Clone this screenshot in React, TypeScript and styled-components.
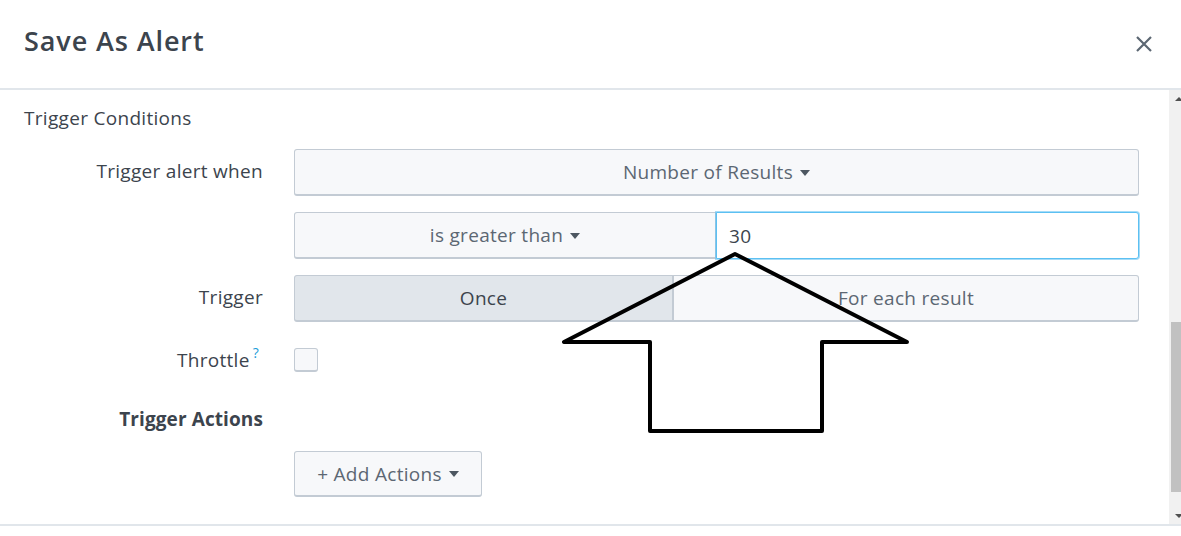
import React from "react";
import styled, { createGlobalStyle } from "styled-components";

const Global = createGlobalStyle`
  *, *::before, *::after { box-sizing: border-box; }
  html, body { margin: 0; padding: 0; background: #fff; }
  body { font-family: "Open Sans", Lato, "Liberation Sans", sans-serif; }
`;

const Page = styled.div`
  position: relative;
  width: 1181px;
  height: 536px;
  background: #fff;
  display: flex;
  flex-direction: column;
  overflow: hidden;
  color: #3c444d;
  font-family: "Open Sans", Lato, "Liberation Sans", sans-serif;
  letter-spacing: 0.3px;
`;

const Header = styled.header`
  height: 90px;
  flex: none;
  display: flex;
  align-items: center;
  justify-content: space-between;
  padding: 0 29px 0 24px;
  border-bottom: 2px solid #e1e6eb;
`;

const Title = styled.h1`
  margin: 0 0 8px 0;
  font-size: 27px;
  font-weight: 600;
  letter-spacing: 0.9px;
  color: #3c444d;
`;

const CloseButton = styled.button`
  width: 16px;
  height: 16px;
  padding: 0;
  border: 0;
  background: none;
  display: flex;
  align-items: center;
  justify-content: center;
  cursor: pointer;
`;

const Body = styled.div`
  height: 434px;
  flex: none;
  display: flex;
`;

const Content = styled.div`
  flex: 1;
  padding: 16px 0 0 24px;
  overflow: hidden;
`;

const SectionTitle = styled.div`
  font-size: 19px;
  line-height: 24px;
  color: #3c444d;
  margin-bottom: 19px;
`;

const Form = styled.div`
  display: flex;
  flex-direction: column;
  gap: 16px;
`;

const Row = styled.div<{ $minHeight?: number }>`
  display: grid;
  grid-template-columns: 239px 845px;
  column-gap: 31px;
  min-height: ${(p) => (p.$minHeight ? `${p.$minHeight}px` : "0")};
`;

const Label = styled.div<{ $bold?: boolean }>`
  text-align: right;
  padding-top: 10px;
  font-size: 19px;
  line-height: 24px;
  height: 34px;
  font-weight: ${(p) => (p.$bold ? 700 : 400)};
  letter-spacing: ${(p) => (p.$bold ? "0.1px" : "0.3px")};
  color: #3c444d;
  white-space: nowrap;
`;

const Help = styled.span`
  display: inline-block;
  font-size: 14px;
  line-height: 14px;
  color: #1a9cd9;
  margin-left: 3px;
  margin-right: 4px;
  position: relative;
  top: -9px;
`;

const Caret = styled.span`
  display: inline-block;
  width: 0;
  height: 0;
  border-left: 5px solid transparent;
  border-right: 5px solid transparent;
  border-top: 6px solid #4d5761;
  margin-top: 1px;
`;

const SelectButton = styled.button<{ $join?: "left" | "right" | "none"; $active?: boolean }>`
  height: 47px;
  width: 100%;
  display: flex;
  align-items: center;
  justify-content: center;
  gap: 7px;
  font-family: inherit;
  font-size: 19px;
  letter-spacing: 0.3px;
  color: ${(p) => (p.$active ? "#3c444d" : "#5c6773")};
  background: ${(p) => (p.$active ? "#e1e6eb" : "#f7f8fa")};
  border: 1px solid #c3cbd4;
  border-bottom-width: 2px;
  border-radius: ${(p) =>
    p.$join === "left" ? "3px 0 0 3px" : p.$join === "right" ? "0 3px 3px 0" : "3px"};
  padding: 0 12px;
  cursor: pointer;
`;

const Joined = styled.div`
  display: flex;
  height: 47px;
`;

const Part = styled.div<{ $basis: number }>`
  flex: 0 0 ${(p) => p.$basis}px;
  display: flex;
`;

const TextInput = styled.input`
  flex: 1;
  min-width: 0;
  height: 47px;
  font-family: inherit;
  font-size: 19px;
  letter-spacing: 0.3px;
  color: #3c444d;
  background: #fff;
  border: 1px solid #5cc0f2;
  box-shadow: 0 0 0 1px rgba(92, 192, 242, 0.55);
  border-radius: 0 3px 3px 0;
  padding: 0 12px;
  outline: none;
`;

const Checkbox = styled.span`
  display: block;
  width: 24px;
  height: 24px;
  margin-top: 10px;
  background: #f7f8fa;
  border: 1px solid #c3cbd4;
  border-bottom-width: 2px;
  border-radius: 3px;
`;

const ActionButton = styled.button`
  height: 46px;
  width: 188px;
  display: flex;
  align-items: center;
  justify-content: center;
  gap: 7px;
  font-family: inherit;
  font-size: 19px;
  letter-spacing: 0.3px;
  color: #5c6773;
  background: #f7f8fa;
  border: 1px solid #c3cbd4;
  border-bottom-width: 2px;
  border-radius: 3px;
  cursor: pointer;
`;

const Scrollbar = styled.div`
  width: 12px;
  flex: none;
  background: #f1f1f1;
  display: flex;
  flex-direction: column;
  overflow: hidden;
`;

const ScrollArrow = styled.div<{ $dir: "up" | "down" }>`
  height: 17px;
  flex: none;
  display: flex;
  align-items: center;
  padding-left: 6px;
  &::after {
    content: "";
    display: block;
    width: 0;
    height: 0;
    border-left: 4px solid transparent;
    border-right: 4px solid transparent;
    ${(p) =>
      p.$dir === "up"
        ? "border-bottom: 4px solid #505050;"
        : "border-top: 4px solid #505050;"}
  }
`;

const Track = styled.div`
  flex: 1;
  display: flex;
  flex-direction: column;
  justify-content: flex-end;
  padding: 0 0 15px 2px;
`;

const Thumb = styled.div`
  height: 170px;
  width: 10px;
  background: #c1c1c1;
`;

const Footer = styled.footer`
  flex: 1;
  border-top: 2px solid #e1e6eb;
  background: #fff;
`;

const Overlay = styled.svg`
  position: absolute;
  left: 0;
  top: 0;
  pointer-events: none;
`;

export default function App() {
  return (
    <>
      <Global />
      <Page>
        <Header>
          <Title>Save As Alert</Title>
          <CloseButton aria-label="Close">
            <svg width="16" height="16" viewBox="0 0 16 16">
              <path d="M1 1 L15 15 M15 1 L1 15" stroke="#5c6773" strokeWidth="2.2" fill="none" />
            </svg>
          </CloseButton>
        </Header>
        <Body>
          <Content>
            <SectionTitle>Trigger Conditions</SectionTitle>
            <Form>
              <Row>
                <Label>Trigger alert when</Label>
                <SelectButton>
                  Number of Results <Caret />
                </SelectButton>
              </Row>
              <Row>
                <Label />
                <Joined>
                  <Part $basis={422}>
                    <SelectButton $join="left">
                      is greater than <Caret />
                    </SelectButton>
                  </Part>
                  <TextInput defaultValue="30" />
                </Joined>
              </Row>
              <Row>
                <Label>Trigger</Label>
                <Joined>
                  <Part $basis={379}>
                    <SelectButton $join="left" $active>
                      Once
                    </SelectButton>
                  </Part>
                  <Part $basis={466}>
                    <SelectButton $join="right">For each result</SelectButton>
                  </Part>
                </Joined>
              </Row>
              <Row $minHeight={43}>
                <Label>
                  Throttle<Help>?</Help>
                </Label>
                <div>
                  <Checkbox />
                </div>
              </Row>
              <Row $minHeight={38}>
                <Label $bold>Trigger Actions</Label>
                <div />
              </Row>
              <Row>
                <Label />
                <div>
                  <ActionButton>
                    + Add Actions <Caret />
                  </ActionButton>
                </div>
              </Row>
            </Form>
          </Content>
          <Scrollbar>
            <ScrollArrow $dir="up" />
            <Track>
              <Thumb />
            </Track>
            <ScrollArrow $dir="down" />
          </Scrollbar>
        </Body>
        <Footer />
        <Overlay width="1181" height="536" viewBox="0 0 1181 536">
          <polygon
            points="735,254 564,342 650,342 650,431 822,431 822,342 907,342"
            fill="none"
            stroke="#000"
            strokeWidth="4"
            strokeLinejoin="round"
          />
        </Overlay>
      </Page>
    </>
  );
}
